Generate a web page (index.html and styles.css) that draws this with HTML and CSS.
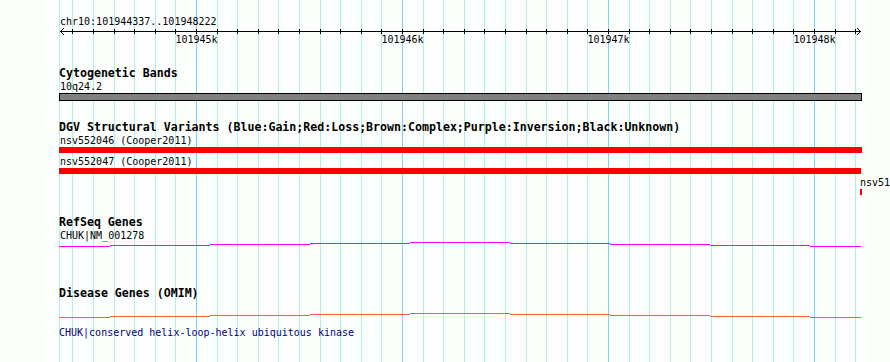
FILE: index.html
```html
<!DOCTYPE html>
<html lang="en">
<head>
  <meta charset="UTF-8" />
  <title>chr10:101944337..101948222</title>
  <link rel="stylesheet" href="styles.css">
</head>
<body>
  <div class="panel">
    <svg class="grid" id="grid" width="890" height="362"></svg>

    <div class="tracks">
      <div class="ruler-label">chr10:101944337..101948222</div>
      <svg class="ruler" id="ruler" width="831" height="18"></svg>

      <div class="track track-cyto">
        <div class="track-title">Cytogenetic Bands</div>
        <div class="label">10q24.2</div>
        <div class="band"></div>
      </div>

      <div class="track track-dgv">
        <div class="track-title">DGV Structural Variants (Blue:Gain;Red:Loss;Brown:Complex;Purple:Inversion;Black:Unknown)</div>
        <div class="label">nsv552046 (Cooper2011)</div>
        <div class="bar" style="width:803px"></div>
        <div class="label label-gap">nsv552047 (Cooper2011)</div>
        <div class="bar" style="width:802px"></div>
        <div class="label label-gap" style="margin-left:800px">nsv51</div>
        <div class="bar" style="margin-left:801px;width:2px"></div>
      </div>

      <div class="track track-refseq">
        <div class="track-title">RefSeq Genes</div>
        <div class="label">CHUK|NM_001278</div>
        <svg class="gene gene-refseq" id="refseq" width="803" height="5"></svg>
      </div>

      <div class="track track-omim">
        <div class="track-title">Disease Genes (OMIM)</div>
        <svg class="gene gene-omim" id="omim" width="803" height="5"></svg>
        <div class="label label-omim">CHUK|conserved helix-loop-helix ubiquitous kinase</div>
      </div>
    </div>
  </div>

  <script>
    const LEFT = 59;
    const segmen = [[0, 51, 4], [51, 151, 3], [151, 251, 2], [251, 351, 1], [351, 451, 0],
                    [451, 551, 1], [551, 651, 2], [651, 751, 3], [751, 802, 4]];

    function px(bp) {
      return Math.round(196 + (bp - 101945000) * 0.206);
    }

    function gambarGrid() {
      let html = `<line class="minor" x1="59.5" y1="0" x2="59.5" y2="362"/>`;
      for (let bp = 101944400; bp <= 101948200; bp += 100) {
        const x = px(bp) + 0.5;
        const kelas = bp % 1000 === 0 ? "major" : "minor";
        html += `<line class="${kelas}" x1="${x}" y1="0" x2="${x}" y2="362"/>`;
      }
      document.getElementById("grid").innerHTML = html;
    }

    function gambarRuler() {
      let html = `<line x1="1" y1="3.5" x2="802" y2="3.5"/>`;
      html += `<path d="M5,0 L1.5,3.5 L5,7"/>`;
      html += `<path d="M798,0 L801.5,3.5 L798,7"/>`;
      for (let bp = 101944400; bp <= 101948200; bp += 100) {
        const x = px(bp) - LEFT + 0.5;
        html += `<line x1="${x}" y1="1" x2="${x}" y2="6"/>`;
        if (bp % 1000 === 0) {
          html += `<text x="${x}" y="15">${bp / 1000}k</text>`;
        }
      }
      document.getElementById("ruler").innerHTML = html;
    }

    function gambarGen(id) {
      const d = segmen.map(s => `M${s[0]},${s[2] + 0.5} H${s[1]}`).join(" ");
      document.getElementById(id).innerHTML = `<path d="${d}"/>`;
    }

    gambarGrid();
    gambarRuler();
    gambarGen("refseq");
    gambarGen("omim");
  </script>
</body>
</html>
```

FILE: styles.css
```css
body {
  margin: 0;
  padding: 0;
  background: #fcfefc;
  color: #000;
  font-family: "DejaVu Sans Mono", "Liberation Mono", monospace;
  font-size: 10px;
  overflow: hidden;
}
.panel {
  position: relative;
  width: 890px;
  height: 362px;
  overflow: hidden;
}
.grid {
  position: absolute;
  left: 0;
  top: 0;
  shape-rendering: crispEdges;
}
.grid .minor {
  stroke: #afeeee;
  stroke-width: 1;
}
.grid .major {
  stroke: #87cefa;
  stroke-width: 1;
}
.tracks {
  position: relative;
  padding: 15px 0 0 59px;
}
.ruler-label {
  line-height: 13px;
  padding-left: 1px;
  white-space: nowrap;
}
.ruler {
  display: block;
}
.ruler line,
.ruler path {
  stroke: #000;
  stroke-width: 1;
  fill: none;
  shape-rendering: crispEdges;
}
.ruler text {
  font-family: "DejaVu Sans Mono", "Liberation Mono", monospace;
  font-size: 10px;
  text-anchor: middle;
  fill: #000;
}
.track {
  margin-top: 21px;
}
.track-dgv {
  margin-top: 20px;
}
.track-omim {
  margin-top: 40px;
}
.track-title {
  font-size: 11.6px;
  font-weight: bold;
  line-height: 13px;
  white-space: nowrap;
}
.label {
  line-height: 13px;
  padding-left: 1px;
  white-space: nowrap;
}
.label-gap {
  margin-top: 2px;
}
.band {
  width: 801px;
  height: 6px;
  border: 1px solid #000;
  background: #808080;
}
.bar {
  height: 6px;
  background: #ff0000;
}
.gene {
  display: block;
  shape-rendering: crispEdges;
}
.gene path {
  fill: none;
  stroke-width: 1;
}
.gene-refseq path {
  stroke: #ff00ff;
}
.gene-omim {
  margin-top: 13px;
}
.gene-omim path {
  stroke: #f85f3f;
}
.label-omim {
  margin-top: 8px;
  padding-left: 0;
  color: #000080;
}
```
